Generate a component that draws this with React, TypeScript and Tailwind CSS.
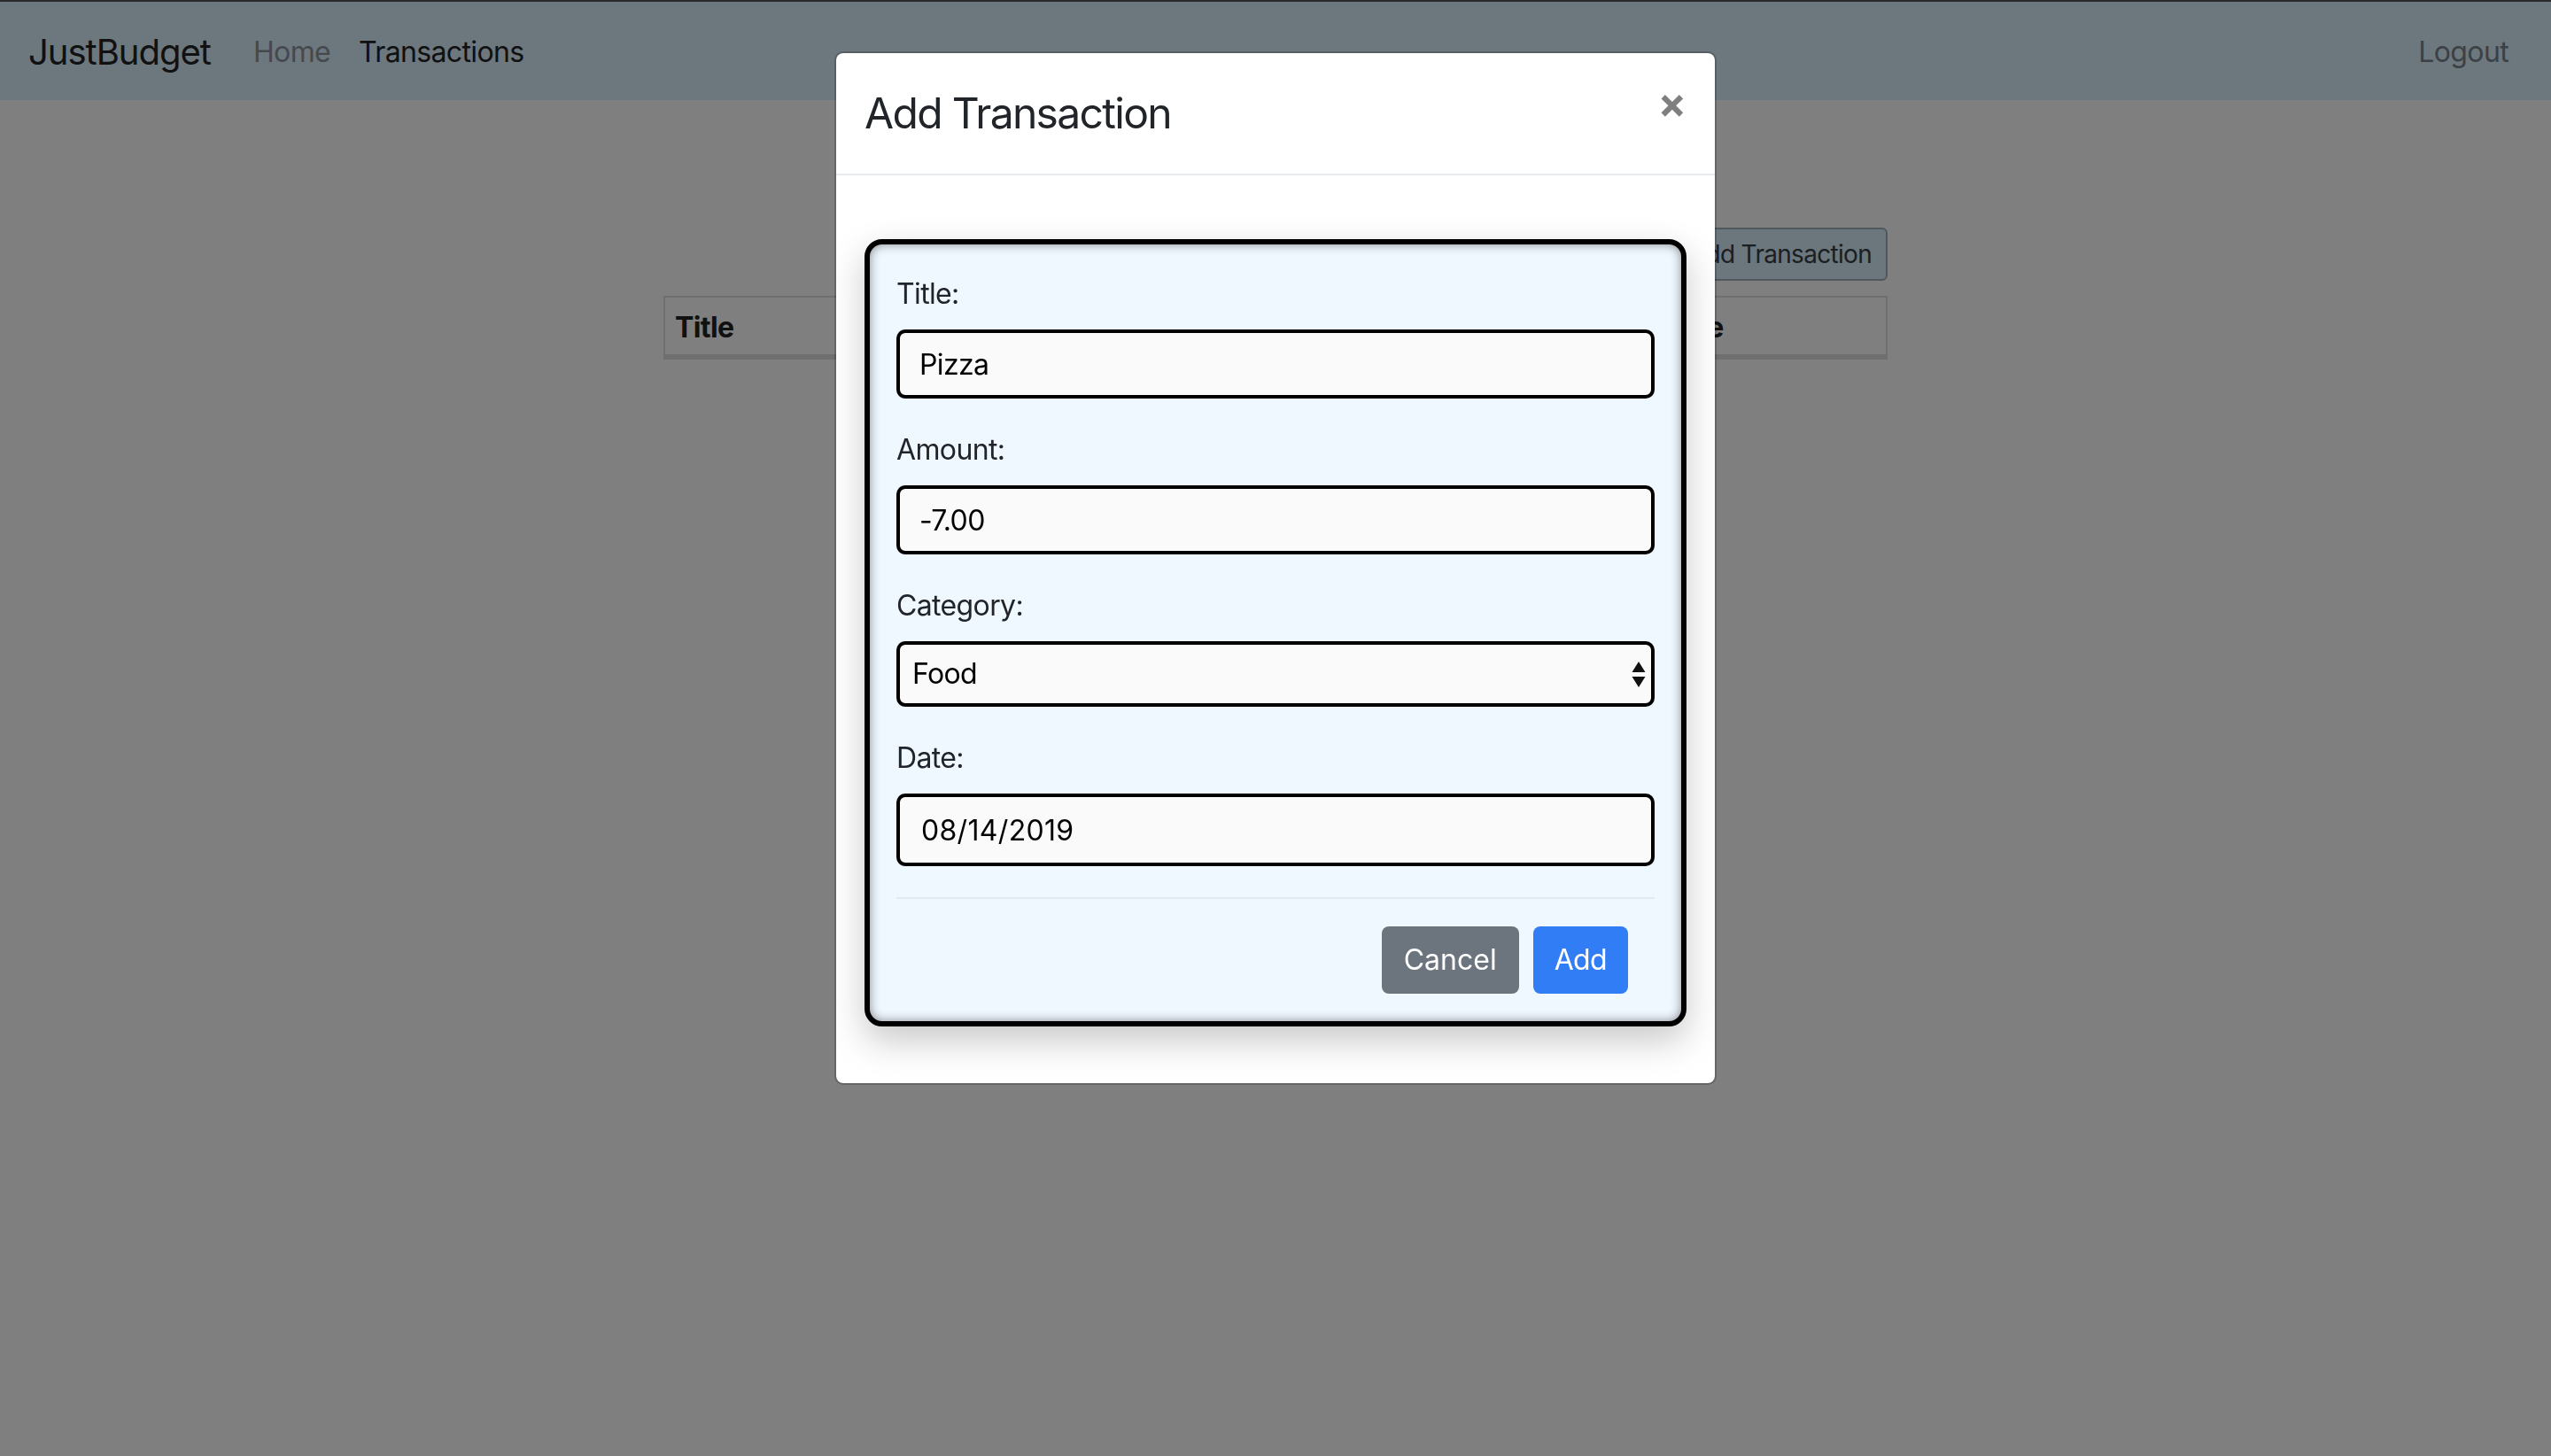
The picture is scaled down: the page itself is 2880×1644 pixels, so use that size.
import React from "react";

const Navbar = () => {
  return (
    <nav className="flex h-[113px] items-center border-t-2 border-[#555] bg-[#daeefc] px-8 pt-[2px]">
      <span className="mr-8 text-[40px] leading-[60px] tracking-[-0.025em] text-[#222]">JustBudget</span>
      <a className="px-4 text-[32px] leading-[48px] tracking-[-0.02em] text-[#8a939c]">Home</a>
      <a className="px-4 text-[32px] leading-[48px] tracking-[-0.02em] text-[#222]">Transactions</a>
      <a className="ml-auto px-4 text-[32px] leading-[48px] tracking-[-0.02em] text-[#76828a]">Logout</a>
    </nav>
  );
};

const TransactionsPage = () => {
  return (
    <main className="mx-auto w-[1382px] pt-[144px]">
      <div className="flex justify-end">
        <button className="h-[60px] rounded-[6px] border-2 border-[#a0b0bc] bg-[#d6ecfa] px-4 text-[28px] tracking-[-0.025em] text-[#363e44]">
          Add Transaction
        </button>
      </div>
      <div className="mt-[17px] border-2 border-[#dedede]">
        <div className="grid h-[68px] grid-cols-[370px_370px_374px_1fr] items-center border-b-4 border-[#dedede] pt-[4px] text-[32px] font-bold tracking-[-0.02em] text-[#222]">
          <span className="pl-[11px]">Title</span>
          <span className="pl-[11px]">Amount</span>
          <span className="pl-[11px]">Category</span>
          <span className="pl-[11px]">Date</span>
        </div>
      </div>
    </main>
  );
};

const Field = ({ label, children, last }: { label: string; children: React.ReactNode; last?: boolean }) => {
  return (
    <div className={last ? "mb-[35px]" : "mb-[34px]"}>
      <label className="mb-4 block text-[32px] leading-[48px] tracking-[-0.02em] text-[#212529]">{label}</label>
      {children}
    </div>
  );
};

const inputClass =
  "block w-full rounded-[10px] border-4 border-black bg-[#fafafa] text-[32px] text-black outline-none";

const AddTransactionModal = () => {
  return (
    <div className="fixed inset-0 bg-black/50">
      <div className="mx-auto mt-[58px] w-[996px] rounded-[10px] border-2 border-black/20 bg-white bg-clip-padding">
        <div className="flex items-start border-b-2 border-[#e9ecef] p-8">
          <h4 className="text-[48px] leading-[72px] tracking-[-0.035em] text-[#212529]">Add Transaction</h4>
          <button className="-m-8 ml-auto p-8 pt-[32px] text-[48px] font-bold leading-none text-black/50 [text-shadow:0_1px_0_#fff]">
            ×
          </button>
        </div>
        <div className="p-8">
          <div className="mt-[40px] mb-8 rounded-[20px] border-[6px] border-black bg-[#f0f8ff] px-[30px] pt-8 shadow-[inset_0_0_12px_rgba(0,0,0,0.45),0_16px_40px_rgba(0,0,0,0.22)]">
            <Field label="Title:">
              <input className={`${inputClass} h-[78px] px-[22px] tracking-[-0.02em]`} defaultValue="Pizza" />
            </Field>
            <Field label="Amount:">
              <input className={`${inputClass} h-[78px] px-[22px] tracking-[-0.02em]`} defaultValue="-7.00" />
            </Field>
            <Field label="Category:">
              <div className="relative">
                <select className={`${inputClass} h-[74px] appearance-none px-[14px] tracking-[-0.02em]`} defaultValue="Food">
                  <option>Food</option>
                  <option>Rent</option>
                  <option>Income</option>
                </select>
                <svg className="pointer-events-none absolute right-[10px] top-[23px]" width="16" height="30" viewBox="0 0 16 30">
                  <path d="M8 0 L15.5 12 L0.5 12 Z" fill="#111" />
                  <path d="M0.5 17 L15.5 17 L8 29 Z" fill="#111" />
                </svg>
              </div>
            </Field>
            <Field label="Date:" last>
              <input className={`${inputClass} h-[82px] px-6 tracking-[0.01em]`} defaultValue="08/14/2019" />
            </Field>
            <div className="flex justify-end gap-4 border-t-2 border-[#e4e9ee] pt-[31px] pr-[30px] pb-[31px]">
              <button className="h-[76px] rounded-[8px] bg-[#6c757d] px-[25px] text-[32px] text-white">Cancel</button>
              <button className="h-[76px] rounded-[8px] bg-[#317df6] px-6 text-[32px] tracking-[-0.02em] text-white">Add</button>
            </div>
          </div>
        </div>
      </div>
    </div>
  );
};

export default function App() {
  return (
    <div className="min-h-screen bg-white font-['Inter','Noto_Sans',sans-serif]">
      <Navbar />
      <TransactionsPage />
      <AddTransactionModal />
    </div>
  );
}
